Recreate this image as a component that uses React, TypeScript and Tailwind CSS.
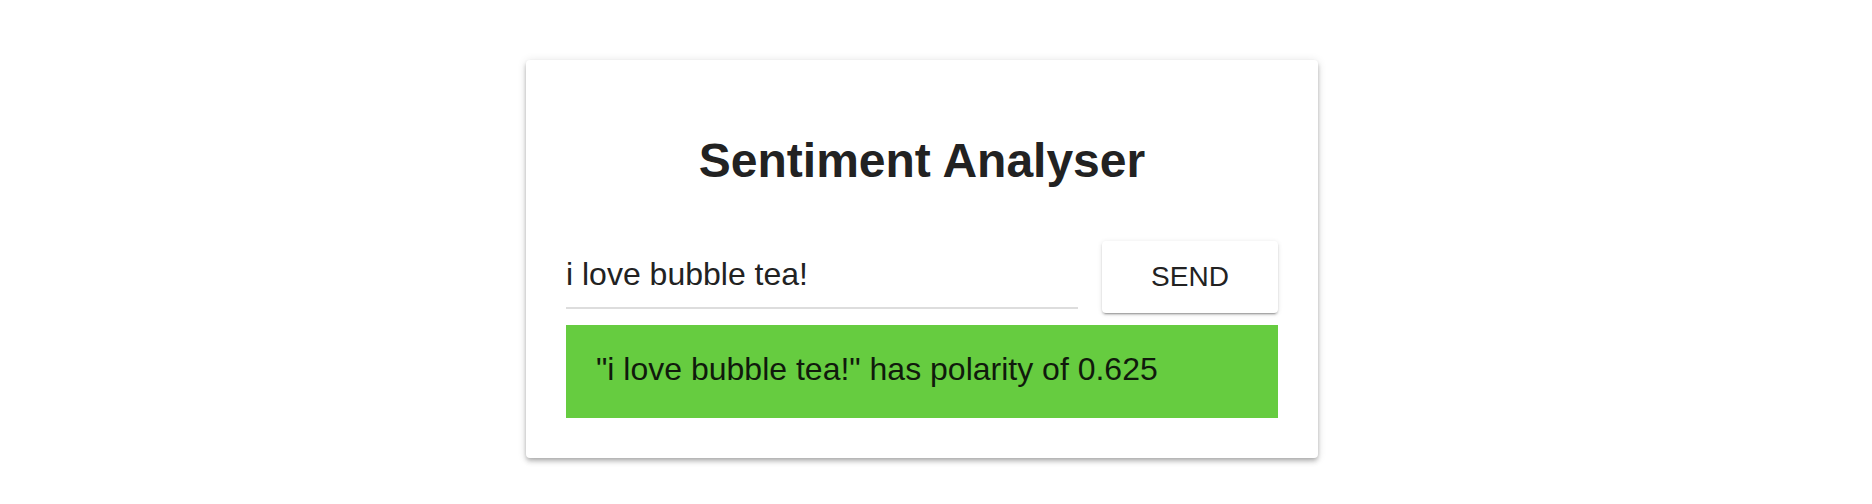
import React from "react";

export default function App() {
  return (
    <div
      className="w-[1872px] h-[504px] bg-white flex justify-start pl-[526px] pt-[60px]"
      style={{ fontFamily: '"Liberation Sans", Arial, Helvetica, sans-serif' }}
    >
      <div className="w-[792px] h-[398px] bg-white rounded-[4px] p-[40px] flex flex-col shadow-[0px_2px_4px_-1px_rgba(0,0,0,0.2),0px_4px_5px_0px_rgba(0,0,0,0.14),0px_1px_10px_0px_rgba(0,0,0,0.12)]">
        <h1 className="mt-[33px] text-[48px] leading-[56px] font-bold text-center text-[#222222]">
          Sentiment Analyser
        </h1>
        <div className="mt-[52px] flex items-start gap-[24px] h-[72px]">
          <div className="flex-1 mt-[11px] pb-[11px] border-b-2 border-[#dddddd]">
            <input
              className="w-full h-[44px] text-[32px] text-[#222222] bg-transparent outline-none p-0"
              defaultValue="i love bubble tea!"
              style={{ fontFamily: '"Liberation Sans", Arial, Helvetica, sans-serif' }}
            />
          </div>
          <button className="w-[176px] h-[72px] bg-white rounded-[4px] text-[28px] text-[#222222] uppercase shadow-[0px_3px_1px_-2px_rgba(0,0,0,0.2),0px_2px_2px_0px_rgba(0,0,0,0.14),0px_1px_5px_0px_rgba(0,0,0,0.12)]">
            Send
          </button>
        </div>
        <div className="mt-[12px] h-[93px] bg-[#66cc40] pl-[30px] pt-[26px] text-[32px] leading-[36px] text-[#101a0c]">
          "i love bubble tea!" has polarity of 0.625
        </div>
      </div>
    </div>
  );
}
